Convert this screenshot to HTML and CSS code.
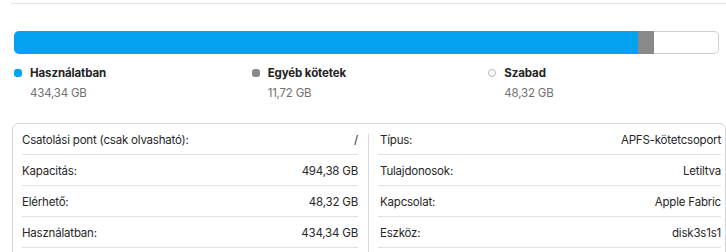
FILE: index.html
```html
<!doctype html>
<html lang="hu">
  <head>
    <title>Lemezhasználat</title>
    <link rel="stylesheet" href="styles.css">
  </head>
  <body>
    <div class="topline"></div>

    <div class="usage-bar">
      <div class="seg seg-used" style="width: 624px;"></div>
      <div class="seg seg-other" style="width: 16px;"></div>
      <div class="seg seg-free"></div>
    </div>

    <div class="legend">
      <div class="legend-item">
        <span class="dot dot-used"></span>
        <div>
          <div class="legend-title">Használatban</div>
          <div class="legend-value">434,34 GB</div>
        </div>
      </div>
      <div class="legend-item">
        <span class="dot dot-other"></span>
        <div>
          <div class="legend-title">Egyéb kötetek</div>
          <div class="legend-value">11,72 GB</div>
        </div>
      </div>
      <div class="legend-item">
        <span class="dot dot-free"></span>
        <div>
          <div class="legend-title">Szabad</div>
          <div class="legend-value">48,32 GB</div>
        </div>
      </div>
    </div>

    <div class="info-panel">
      <div class="info-col info-left">
        <div class="info-row"><span>Csatolási pont (csak olvasható):</span><span>/</span></div>
        <div class="info-row"><span>Kapacitás:</span><span>494,38 GB</span></div>
        <div class="info-row"><span>Elérhető:</span><span>48,32 GB</span></div>
        <div class="info-row"><span>Használatban:</span><span>434,34 GB</span></div>
      </div>
      <div class="info-sep"></div>
      <div class="info-col info-right">
        <div class="info-row"><span>Típus:</span><span>APFS-kötetcsoport</span></div>
        <div class="info-row"><span>Tulajdonosok:</span><span>Letiltva</span></div>
        <div class="info-row"><span>Kapcsolat:</span><span>Apple Fabric</span></div>
        <div class="info-row"><span>Eszköz:</span><span>disk3s1s1</span></div>
      </div>
    </div>
  </body>
</html>
```

FILE: styles.css
```css
body {
  margin: 0;
  width: 726px;
  height: 252px;
  overflow: hidden;
  background: #ffffff;
  font-family: Inter, "Liberation Sans", sans-serif;
  font-size: 11.5px;
  letter-spacing: -0.2px;
  color: #262626;
}

.topline {
  margin: 3px 0 0 11px;
  height: 1px;
  background: #e4e4e4;
}

.usage-bar {
  display: flex;
  height: 23px;
  margin: 27px 7px 0 14px;
}

.seg {
  height: 100%;
  box-sizing: border-box;
}

.seg-used {
  background: #03a3f1;
  border-radius: 5px 0 0 5px;
}

.seg-other {
  background: #898989;
}

.seg-free {
  flex: 1;
  background: #ffffff;
  border: 1px solid #cfcfcf;
  border-left: none;
  border-radius: 0 5px 5px 0;
}

.legend {
  display: flex;
  margin: 11px 0 0 14px;
}

.legend-item {
  display: flex;
  gap: 8px;
  width: 240px;
}

.legend-item:nth-child(2) {
  width: 239px;
}

.dot {
  flex-shrink: 0;
  width: 8px;
  height: 8px;
  margin-top: 4px;
  border-radius: 3px;
  box-sizing: border-box;
}

.dot-used {
  background: #03a3f1;
}

.dot-other {
  background: #898989;
}

.dot-free {
  background: #ffffff;
  border: 1px solid #b8b8b8;
  border-radius: 50%;
}

.legend-title {
  font-weight: 700;
  line-height: 16px;
  letter-spacing: -0.1px;
  color: #222222;
}

.legend-value {
  margin-top: 4px;
  line-height: 16px;
  color: #707070;
}

.info-panel {
  display: flex;
  width: 714px;
  height: 140px;
  box-sizing: border-box;
  margin: 22px 0 0 12px;
  padding: 0 4px 0 9px;
  border: 1px solid #d6d6d6;
  border-radius: 6px;
}

.info-left {
  width: 336px;
}

.info-right {
  width: 343px;
  margin-left: 9px;
}

.info-sep {
  width: 1px;
  margin: 10px 0 0 10px;
  background: #dcdcdc;
}

.info-row {
  display: flex;
  justify-content: space-between;
  height: 31px;
  padding-top: 8px;
  box-sizing: border-box;
  line-height: 16px;
  border-bottom: 1px solid #e2e2e2;
}

.info-right .info-row span:first-child {
  padding-left: 2px;
}
```
